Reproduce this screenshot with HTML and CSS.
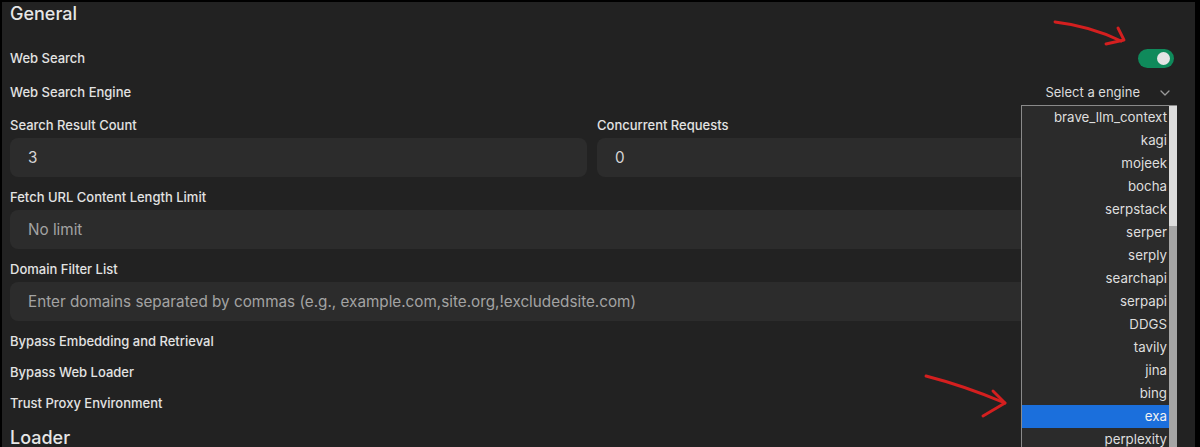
FILE: index.html
```html
<!DOCTYPE html>
<html lang="en">
<head>
    <meta charset="UTF-8">
    <meta name="viewport" content="width=device-width, initial-scale=1.0">
    <title>Web Search Settings</title>
    <link rel="stylesheet" href="styles.css">
</head>
<body>

<div class="frame">
    <div class="panel">
        <h2 class="section-title">General</h2>

        <div class="row row-first">
            <span class="label">Web Search</span>
            <div class="toggle on"><span class="knob"></span></div>
        </div>

        <div class="row row-engine">
            <span class="label">Web Search Engine</span>
            <div class="select">
                <span>Select a engine</span>
                <svg class="chevron" width="10" height="6" viewBox="0 0 10 6">
                    <path d="M1 1 L5 5 L9 1" fill="none" stroke="#9a9a9a" stroke-width="1.3" stroke-linecap="round" stroke-linejoin="round"/>
                </svg>
            </div>
        </div>

        <div class="grid-2">
            <div class="field">
                <label class="label">Search Result Count</label>
                <input class="text-input" type="text" value="3">
            </div>
            <div class="field">
                <label class="label">Concurrent Requests</label>
                <input class="text-input" type="text" value="0">
            </div>
        </div>

        <div class="field field-gap">
            <label class="label">Fetch URL Content Length Limit</label>
            <input class="text-input" type="text" placeholder="No limit">
        </div>

        <div class="field field-gap">
            <label class="label">Domain Filter List</label>
            <input class="text-input" type="text" placeholder="Enter domains separated by commas (e.g., example.com,site.org,!excludedsite.com)">
        </div>

        <div class="row row-bypass">
            <span class="label">Bypass Embedding and Retrieval</span>
        </div>
        <div class="row row-small">
            <span class="label">Bypass Web Loader</span>
        </div>
        <div class="row row-small">
            <span class="label">Trust Proxy Environment</span>
        </div>

        <h2 class="section-title loader-title">Loader</h2>
    </div>

    <!-- Desplegable nativo abierto -->
    <div class="dropdown">
        <ul class="options">
            <li>brave_llm_context</li>
            <li>kagi</li>
            <li>mojeek</li>
            <li>bocha</li>
            <li>serpstack</li>
            <li>serper</li>
            <li>serply</li>
            <li>searchapi</li>
            <li>serpapi</li>
            <li>DDGS</li>
            <li>tavily</li>
            <li>jina</li>
            <li>bing</li>
            <li class="selected">exa</li>
            <li>perplexity</li>
        </ul>
        <div class="scrollbar"><span class="thumb"></span></div>
    </div>

    <!-- Flechas rojas dibujadas a mano -->
    <svg class="annotations" width="1193" height="445" viewBox="0 0 1193 445">
        <g fill="none" stroke="#d41f1f" stroke-width="2.9" stroke-linecap="round" stroke-linejoin="round">
            <path d="M1055 22 Q1090 26 1121 41"/>
            <path d="M1118 28 L1124 40 L1106 44"/>
            <path d="M926 376 Q965 386 1005 403"/>
            <path d="M993 391 L1005 403 L983 416"/>
        </g>
    </svg>
</div>

</body>
</html>
```

FILE: styles.css
```css
* {
    box-sizing: border-box;
}

body {
    margin: 0;
    background: #000;
    font-family: 'Inter', 'Noto Sans', sans-serif;
    color: #e3e3e3;
    overflow: hidden;
}

.frame {
    position: relative;
    margin: 2px 5px 0 2px;
    height: 445px;
    background: #222222;
    overflow: hidden;
}

.panel {
    padding: 0 21px 0 8px;
}

.section-title {
    margin: 0;
    font-size: 18px;
    line-height: 24px;
    font-weight: 500;
    color: #e6e6e6;
}

.loader-title {
    margin-top: 13px;
}

.row {
    display: flex;
    justify-content: space-between;
    align-items: center;
    height: 20px;
}

.row-first {
    margin-top: 22px;
}

.row-engine {
    margin-top: 14px;
}

.row-bypass {
    margin-top: 10px;
}

.row-small {
    margin-top: 11px;
}

.label {
    display: block;
    font-size: 13px;
    line-height: 20px;
    font-weight: 500;
    color: #e3e3e3;
}

.toggle {
    width: 36px;
    height: 19px;
    border-radius: 10px;
    background: #3a3a3a;
    display: flex;
    align-items: center;
    padding: 0 4px;
}

.toggle.on {
    background: #0f8a5b;
    justify-content: flex-end;
}

.knob {
    width: 13px;
    height: 13px;
    border-radius: 50%;
    background: #e4e4e4;
}

.select {
    display: flex;
    align-items: center;
    gap: 20px;
    font-size: 13px;
    color: #dcdcdc;
    padding-right: 4px;
}

.chevron {
    margin-top: 1px;
}

.grid-2 {
    display: grid;
    grid-template-columns: 1fr 1fr;
    gap: 10px;
    margin-top: 13px;
}

.field {
    display: flex;
    flex-direction: column;
    gap: 3px;
}

.field-gap {
    margin-top: 10px;
}

.text-input {
    height: 39px;
    width: 100%;
    border: none;
    outline: none;
    border-radius: 8px;
    background: #2c2c2c;
    padding: 0 18px;
    font-family: inherit;
    font-size: 15.25px;
    color: #d6d6d6;
}

.text-input::placeholder {
    color: #a3a3a3;
}

.dropdown {
    position: absolute;
    left: 1019px;
    top: 103px;
    width: 156px;
    height: 360px;
    background: #2b2b2b;
    border: 1px solid #8a8a8a;
    border-right: none;
    display: flex;
}

.options {
    list-style: none;
    margin: 0;
    padding: 0;
    flex: 1;
}

.options li {
    height: 23px;
    line-height: 23px;
    font-size: 13.3px;
    text-align: right;
    padding-right: 2px;
    color: #dedede;
}

.options li.selected {
    background: #1b6fdc;
    color: #f2f2f2;
}

.scrollbar {
    position: relative;
    width: 8px;
    background: #dcdcdc;
}

.thumb {
    position: absolute;
    left: 0;
    right: 0;
    top: 120px;
    bottom: 0;
    background: #a5a5a5;
}

.annotations {
    position: absolute;
    left: -2px;
    top: -2px;
    pointer-events: none;
}
```
